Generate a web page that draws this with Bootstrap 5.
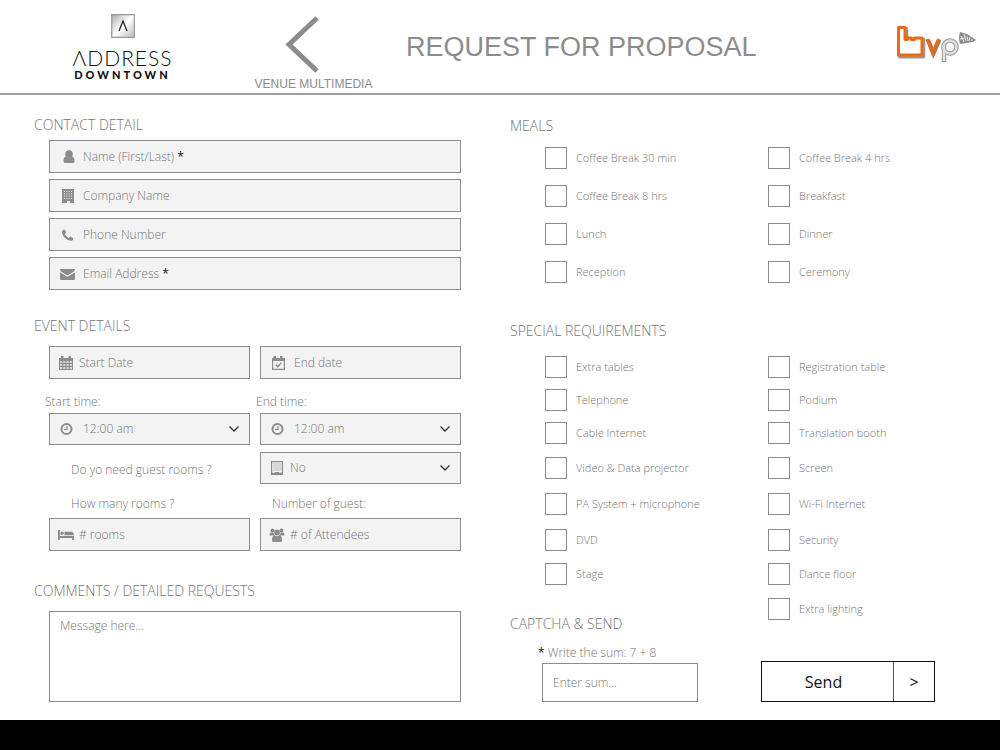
<!DOCTYPE html>
<html lang="en">
<head>
<meta charset="utf-8">
<meta name="viewport" content="width=device-width, initial-scale=1">
<title>Request for Proposal</title>
<link href="https://cdn.jsdelivr.net/npm/bootstrap@5.3.0/dist/css/bootstrap.min.css" rel="stylesheet">
<style>
:root { --ink: #757575; --line: #8c8c8c; --fill: #f3f3f3; }
body { font-family: "Open Sans", "Noto Sans", sans-serif; font-weight: 300; font-size: 12px; line-height: 20px; color: var(--ink); background: #fff; }
.topbar { height: 95px; border-bottom: 2px solid #a0a0a0; font-family: "Liberation Sans", Arial, sans-serif; font-weight: 400; }
.brand { width: 245px; padding-top: 14px; color: #111; }
.brand-name { font: 300 21px/22px Lato, sans-serif; letter-spacing: 1px; margin-top: 9px; }
.brand-place { font: 900 11px/12px Lato, sans-serif; letter-spacing: 3px; }
.back { width: 137px; padding-top: 16px; color: #8c8c8c; font-size: 12px; line-height: 14px; }
.back svg { margin-right: 24px; }
.page-title { font-size: 27px; line-height: 32px; font-weight: 400; padding: 31px 0 0 24px; color: #8c8c8c; }
.partner { padding: 22px 22px 0 0; }
.left { padding: 20px 39px 15px 34px; }
.right { padding: 21px 9px 15px 10px; }
.sec { font-size: 14px; line-height: 20px; font-weight: 300; margin: 0; }
.indent { padding-left: 15px; }
.contact { display: grid; gap: 6px; padding-top: 5px; }
.event-head { margin-top: 26px; }
.comment-head, .special-head { margin-top: 30px; }
.gap-xs { margin-top: 1px; }
.gap-s { margin-top: 4px; }
.gap-m { margin-top: 7px; }
.gap-l { margin-top: 10px; }
.gap-xl { margin-top: 13px; }
.field { height: 33px; border: 1px solid var(--line); background: var(--fill); }
.field svg { width: 18px; height: 16px; flex: none; fill: #8c8c8c; margin-left: 7px; }
.field .stack { display: grid; flex: 1; min-width: 0; margin-left: 4px; }
.field .stack > * { grid-area: 1 / 1; }
.field label { pointer-events: none; }
.field input:not(:placeholder-shown) + label { visibility: hidden; }
.field.wide svg { margin-left: 9px; }
.field.wide .stack { margin-left: 6px; }
.field.choice { height: 32px; }
.field.time svg { margin-left: 8px; }
.field.time .stack { margin-left: 7px; }
.plain { border: 0; background: transparent; color: inherit; font: inherit; padding: 0; width: 100%; min-width: 0; outline: 0; border-radius: 0; }
.plain::placeholder, .boxed::placeholder { color: var(--ink); opacity: 1; }
.req { color: #111; font-weight: 400; }
.pair { display: grid; grid-template-columns: 1fr 1fr; column-gap: 10px; }
.outdent { margin-left: -4px; }
.inset-a { padding-left: 22px; }
.inset-b { padding-left: 12px; }
select.plain { appearance: none; padding-right: 26px; background: url("data:image/svg+xml,%3Csvg xmlns='http://www.w3.org/2000/svg' viewBox='0 0 12 8'%3E%3Cpath d='M1.500 1.500 6 6l4.500-4.500' fill='none' stroke='%23333' stroke-width='1.300'/%3E%3C/svg%3E") right 9px center / 12px 8px no-repeat; }
.boxed { border: 1px solid var(--line); background: #fff; color: inherit; font: inherit; border-radius: 0; padding: 4px 10px; display: block; resize: none; }
.boxed.message { width: 100%; height: 91px; }
.boxed.sum { width: 156px; height: 39px; }
.checks { display: grid; grid-template-columns: 1fr 1fr; padding-left: 35px; font-size: 11px; }
.meals { grid-auto-rows: 38px; padding-top: 3px; }
.special { grid-template-rows: 32px 33px 34px 36px 36px 35px 34px 36px; }
.tick { display: flex; align-items: center; gap: 9px; }
.tick input { appearance: none; width: 22px; height: 22px; margin: 0; border: 1px solid var(--line); background: #fff; }
.tick input:checked { background: var(--line); box-shadow: inset 0 0 0 4px #fff; }
.c2 { grid-column: 2; }
.closing { margin-top: -13px; }
.captcha { padding: 9px 0 0 32px; }
.send { width: 174px; height: 41px; border: 1px solid #111; background: #fff; color: #111; padding: 0; font-size: 16px; font-weight: 400; margin-right: 56px; }
.send .word { padding-right: 8px; }
.send .go { width: 41px; border-left: 1px solid #555; }
footer { height: 30px; background: #000; }
</style>
</head>
<body class="d-flex flex-column min-vh-100">
<svg class="d-none" xmlns="http://www.w3.org/2000/svg">
  <symbol id="i-user" viewBox="0 0 18 16"><circle cx="10" cy="5" r="3.800"/><path d="M4.500 12q0-4.500 2.700-4.500a4.500 4.500 0 0 0 5.600 0Q15.500 7.500 15.500 12q0 2-1.500 2H6Q4.500 14 4.500 12Z"/></symbol>
  <symbol id="i-bld" viewBox="0 0 18 16"><path fill-rule="evenodd" d="M3 1h12v14h-4v-2H8v2H3ZM5 3v1h1V3Zm2.300 0v1h1V3Zm2.400 0v1h1V3ZM12 3v1h1V3ZM5 5.300v1h1v-1Zm2.300 0v1h1v-1Zm2.400 0v1h1v-1Zm2.300 0v1h1v-1ZM5 7.600v1h1v-1Zm2.300 0v1h1v-1Zm2.400 0v1h1v-1Zm2.300 0v1h1v-1ZM5 10v1h1v-1Zm2.300 0v1h1v-1Zm2.400 0v1h1v-1Zm2.300 0v1h1v-1Z"/></symbol>
  <symbol id="i-tel" viewBox="0 0 18 16"><path d="M3 4.200Q3.500 2.500 5.600 2.500l1.700 3-1.500 1.500q1.200 2.700 4 4l1.500-1.500 3 1.700q0 2.200-1.800 2.600Q9.500 14.300 6 11 2.500 7.500 3 4.200Z"/></symbol>
  <symbol id="i-mail" viewBox="0 0 18 16"><path d="M1 3.500Q1 3 2 3h13q1 0 1 .8 0 1-1 1.800L9.500 9q-1 .700-2 0L2 5.600Q1 4.800 1 3.500Z"/><path d="M1 6.300 7 10q1.500 1 3 0L16 6.300V13q0 1-1 1H2q-1 0-1-1Z"/></symbol>
  <symbol id="i-cal" viewBox="0 0 18 16"><path fill-rule="evenodd" d="M2 3h2V1h2.500v2h5V1H14v2h2v12H2ZM3 6v2h2.200V6Zm3.200 0v2h2.300V6Zm3.300 0v2h2.300V6Zm3.300 0v2H15V6ZM3 9v2h2.200V9Zm3.200 0v2h2.300V9Zm3.300 0v2h2.300V9Zm3.300 0v2H15V9ZM3 12v2h2.200v-2Zm3.200 0v2h2.300v-2Zm3.300 0v2h2.300v-2Zm3.300 0v2H15v-2Z"/><path d="M3 6h12v8H3Z" fill="#8c8c8c" opacity=".3"/></symbol>
  <symbol id="i-calok" viewBox="0 0 18 16"><path fill-rule="evenodd" d="M3 3h1.500V1H7v2h4V1h2.500v2H16v12H3ZM4.200 6v7.800h10.600V6Z"/><path d="m6.800 9.800 2 2 3.500-4" fill="none" stroke="#8c8c8c" stroke-width="1.300"/></symbol>
  <symbol id="i-clock" viewBox="0 0 18 16"><circle cx="8.500" cy="8" r="5" fill="none" stroke="#8c8c8c" stroke-width="2"/><path d="M9 5v3.500H6" fill="none" stroke="#8c8c8c" stroke-width="1.200"/></symbol>
  <symbol id="i-hotel" viewBox="0 0 18 16"><path fill-rule="evenodd" d="M3 1h12v14H3Zm1.200 1.200v10.600h9.600V2.200Z"/><path d="M5 4h8M5 6h8M5 8h8M5 10h8" stroke="#bdbdbd" stroke-width="1"/><path d="M7 12h4v2H7Z"/></symbol>
  <symbol id="i-bed" viewBox="0 0 18 16"><path d="M1 3h1.800v6H17v4h-1.800v-2H2.800v2H1Z"/><circle cx="5" cy="6.300" r="1.700"/><path d="M7.500 4.800H14q3 0 3 3.500H7.500Z"/></symbol>
  <symbol id="i-users" viewBox="0 0 18 16"><circle cx="4.500" cy="3.500" r="2"/><circle cx="13.500" cy="3.500" r="2"/><circle cx="9" cy="5.500" r="2.900"/><path d="M1.500 8.500Q1.500 5.500 3 5.500h2.500q0 2 1.500 3ZM16.500 8.500q0-3-1.500-3h-2.500q0 2-1.500 3ZM4 13q0-4.500 2.500-4.500 2.500 1.500 5 0Q14 8.500 14 13q0 2-1.500 2h-7Q4 15 4 13Z"/></symbol>
</svg>

<header class="topbar d-flex">
  <div class="brand d-flex flex-column align-items-center">
    <svg width="24" height="24" viewBox="0 0 24 24" aria-hidden="true"><defs><linearGradient id="g" x1="0" y1="0" x2="1" y2="1"><stop offset="0" stop-color="#aaa"/><stop offset=".5" stop-color="#fff"/><stop offset="1" stop-color="#bbb"/></linearGradient></defs><path d="M.7.7h22.600v22.600H.7Z" fill="url(#g)" stroke="#999" stroke-width="1.200"/><path d="m8 17 4-10 4 10" fill="none" stroke="#222" stroke-width="1.300"/></svg>
    <div class="brand-name">ΛDDRESS</div>
    <div class="brand-place">DOWNTOWN</div>
  </div>
  <a href="#" class="back d-flex flex-column align-items-center text-decoration-none">
    <svg width="36" height="57" viewBox="0 0 36 57" aria-hidden="true"><path d="M33 2 5 28.500 33 55" fill="none" stroke="#8c8c8c" stroke-width="5"/></svg>
    <span class="mt-1">VENUE MULTIMEDIA</span>
  </a>
  <h1 class="page-title mb-0">REQUEST FOR PROPOSAL</h1>
  <div class="partner ms-auto">
    <svg width="84" height="44" viewBox="0 0 84 44" role="img" aria-label="bvp">
      <path d="M4.500 5.500h6.500v12h2.500v-1.500h4v1.500h3v-1.500h7.500v17h-23.500Z" transform="translate(1.300 1.500)" fill="none" stroke="#999" stroke-width="4" stroke-linejoin="round"/>
      <path d="M4.500 5.500h6.500v12h2.500v-1.500h4v1.500h3v-1.500h7.500v17h-23.500Z" fill="#fff" stroke="#ea6a1c" stroke-width="3" stroke-linejoin="round"/>
      <path d="m34 17.500 5.500 14 6-14" fill="none" stroke="#a5775c" stroke-width="4"/>
      <path d="m33 17 5.500 14 6-14" fill="none" stroke="#ea6a1c" stroke-width="3"/>
      <g fill="none" stroke="#999" stroke-width="4.500"><path d="M50 40V24"/><circle cx="56" cy="25" r="6.500"/></g>
      <g fill="none" stroke="#dedede" stroke-width="2.500"><path d="M50 39V24"/><circle cx="56" cy="25" r="6.500"/></g>
      <path d="m66 10 7 2 9 6-3 2-13 2q-2-6 0-12Z" fill="#8c8c8c"/><path d="m67 14 3 6M70 12l2 7M73 14l1 5M66 17l5-1M76 15l-1 4M78 17v2" stroke="#eee" stroke-width="1"/>
    </svg>
  </div>
</header>

<form class="row g-0 flex-grow-1" onsubmit="return false">
  <div class="col-6 left">
    <h2 class="sec">CONTACT DETAIL</h2>
    <div class="indent contact">
      <div class="field wide d-flex align-items-center"><svg><use href="#i-user"/></svg><div class="stack"><input class="plain" id="name" placeholder=" "><label for="name">Name (First/Last) <span class="req">*</span></label></div></div>
      <div class="field wide d-flex align-items-center"><svg><use href="#i-bld"/></svg><div class="stack"><input class="plain" aria-label="Company Name" placeholder="Company Name"></div></div>
      <div class="field wide d-flex align-items-center"><svg><use href="#i-tel"/></svg><div class="stack"><input class="plain" type="tel" aria-label="Phone Number" placeholder="Phone Number"></div></div>
      <div class="field wide d-flex align-items-center"><svg><use href="#i-mail"/></svg><div class="stack"><input class="plain" type="email" id="email" placeholder=" "><label for="email">Email Address <span class="req">*</span></label></div></div>
    </div>

    <h2 class="sec event-head">EVENT DETAILS</h2>
    <div class="indent">
      <div class="pair gap-l">
        <div class="field d-flex align-items-center"><svg><use href="#i-cal"/></svg><div class="stack"><input class="plain" aria-label="Start Date" placeholder="Start Date"></div></div>
        <div class="field time d-flex align-items-center"><svg><use href="#i-calok"/></svg><div class="stack"><input class="plain" aria-label="End date" placeholder="End date"></div></div>
      </div>
      <div class="pair gap-xl">
        <label for="st" class="outdent">Start time:</label><label for="et" class="outdent">End time:</label>
      </div>
      <div class="pair gap-xs">
        <div class="field choice time d-flex align-items-center"><svg><use href="#i-clock"/></svg><div class="stack"><select class="plain" id="st"><option>12:00 am</option></select></div></div>
        <div class="field choice time d-flex align-items-center"><svg><use href="#i-clock"/></svg><div class="stack"><select class="plain" id="et"><option>12:00 am</option></select></div></div>
      </div>
      <div class="pair align-items-center gap-m">
        <label for="gr" class="inset-a pt-1">Do yo need guest rooms ?</label>
        <div class="field choice d-flex align-items-center"><svg><use href="#i-hotel"/></svg><div class="stack"><select class="plain" id="gr"><option>No</option><option>Yes</option></select></div></div>
      </div>
      <div class="pair gap-l">
        <label for="nr" class="inset-a">How many rooms ?</label><label for="ng" class="inset-b">Number of guest:</label>
      </div>
      <div class="pair gap-s">
        <div class="field d-flex align-items-center"><svg><use href="#i-bed"/></svg><div class="stack"><input class="plain" id="nr" placeholder="# rooms"></div></div>
        <div class="field d-flex align-items-center"><svg><use href="#i-users"/></svg><div class="stack"><input class="plain" id="ng" placeholder="# of Attendees"></div></div>
      </div>
    </div>

    <h2 class="sec comment-head">COMMENTS / DETAILED REQUESTS</h2>
    <div class="indent gap-l"><textarea class="boxed message" aria-label="Message" placeholder="Message here..."></textarea></div>
  </div>

  <div class="col-6 right d-flex flex-column">
    <h2 class="sec">MEALS</h2>
    <div class="checks meals">
      <label class="tick"><input type="checkbox">Coffee Break 30 min</label><label class="tick"><input type="checkbox">Coffee Break 4 hrs</label>
      <label class="tick"><input type="checkbox">Coffee Break 8 hrs</label><label class="tick"><input type="checkbox">Breakfast</label>
      <label class="tick"><input type="checkbox">Lunch</label><label class="tick"><input type="checkbox">Dinner</label>
      <label class="tick"><input type="checkbox">Reception</label><label class="tick"><input type="checkbox">Ceremony</label>
    </div>
    <h2 class="sec special-head">SPECIAL REQUIREMENTS</h2>
    <div class="checks special gap-l">
      <label class="tick"><input type="checkbox">Extra tables</label><label class="tick"><input type="checkbox">Registration table</label>
      <label class="tick"><input type="checkbox">Telephone</label><label class="tick"><input type="checkbox">Podium</label>
      <label class="tick"><input type="checkbox">Cable Internet</label><label class="tick"><input type="checkbox">Translation booth</label>
      <label class="tick"><input type="checkbox">Video &amp; Data projector</label><label class="tick"><input type="checkbox">Screen</label>
      <label class="tick"><input type="checkbox">PA System + microphone</label><label class="tick"><input type="checkbox">Wi-Fi Internet</label>
      <label class="tick"><input type="checkbox">DVD</label><label class="tick"><input type="checkbox">Security</label>
      <label class="tick"><input type="checkbox">Stage</label><label class="tick"><input type="checkbox">Dance floor</label>
      <label class="tick c2"><input type="checkbox">Extra lighting</label>
    </div>
    <div class="closing d-flex justify-content-between align-items-end">
      <div>
        <h2 class="sec">CAPTCHA &amp; SEND</h2>
        <div class="captcha">
          <label for="sum" class="outdent"><span class="req">*</span> Write the sum: 7 + 8</label>
          <input class="boxed sum" id="sum" placeholder="Enter sum...">
        </div>
      </div>
      <button class="send d-flex align-items-stretch" type="submit"><span class="word flex-grow-1 align-self-center">Send</span><span class="go d-flex align-items-center justify-content-center">&gt;</span></button>
    </div>
  </div>
</form>
<footer></footer>
<script src="https://cdn.jsdelivr.net/npm/bootstrap@5.3.0/dist/js/bootstrap.bundle.min.js"></script>
</body>
</html>
